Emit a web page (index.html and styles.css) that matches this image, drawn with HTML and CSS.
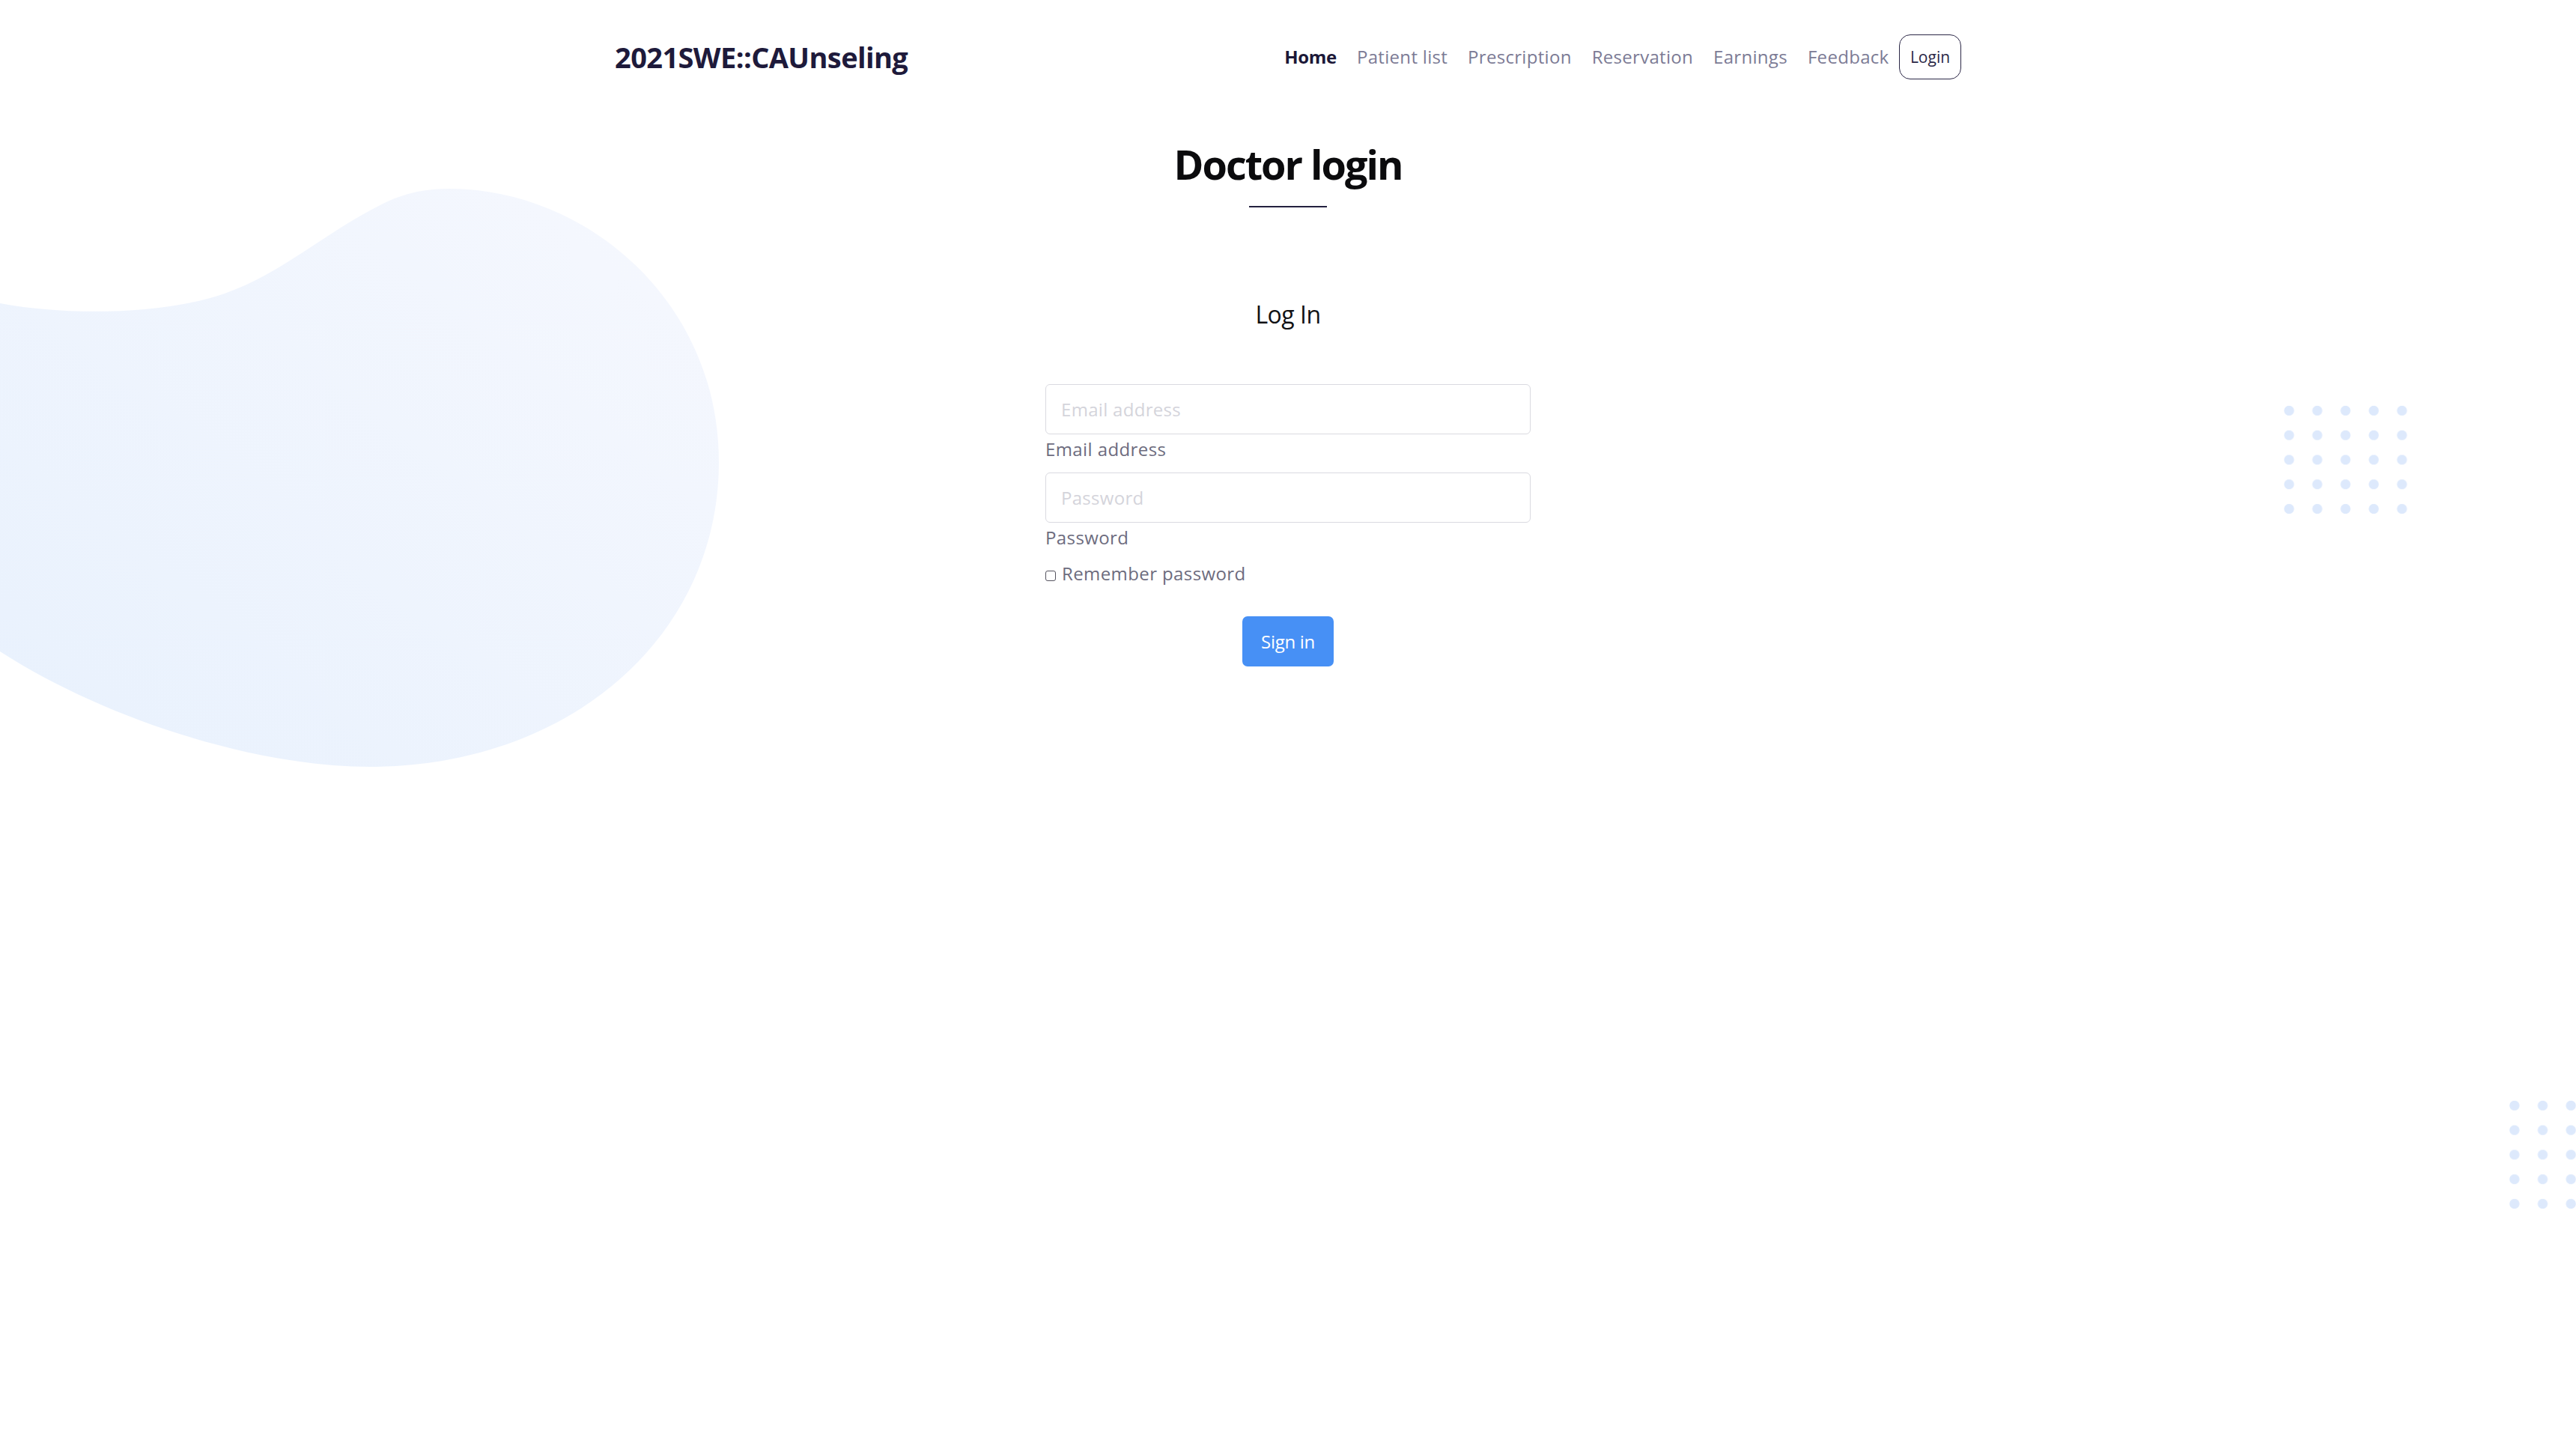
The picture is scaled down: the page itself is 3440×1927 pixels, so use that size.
FILE: index.html
```html
<!DOCTYPE html>
<html lang="en">
<head>
<meta charset="utf-8">
<title>Doctor login</title>
<link rel="stylesheet" href="styles.css">
</head>
<body>
<svg class="blob" width="1000" height="1100" viewBox="0 0 1000 1100" aria-hidden="true">
  <defs>
    <linearGradient id="blobGrad" x1="0" y1="1" x2="1" y2="0">
      <stop offset="0" stop-color="#e8f1fd"/>
      <stop offset="1" stop-color="#f6f8fe"/>
    </linearGradient>
  </defs>
  <path fill="url(#blobGrad)" d="M-10 403 L0 405 C90 422 220 420 300 392 C380 364 440 305 520 268 C548 256 572 252 600 252 C780 252 960 400 960 617 C960 850 760 1024 494 1024 C340 1024 140 960 0 870 L-10 870 Z"/>
</svg>
<div class="dots dots-top"></div>
<div class="dots dots-bottom"></div>

<header class="topbar">
  <div class="container nav-row">
    <a class="brand" href="#">2021SWE::CAUnseling</a>
    <nav class="menu">
      <a class="menu-link active" href="#">Home</a>
      <a class="menu-link" href="#">Patient list</a>
      <a class="menu-link" href="#">Prescription</a>
      <a class="menu-link" href="#">Reservation</a>
      <a class="menu-link" href="#">Earnings</a>
      <a class="menu-link" href="#">Feedback</a>
      <a class="login-btn" href="#">Login</a>
    </nav>
  </div>
</header>

<main class="page">
  <h1 class="page-title">Doctor login</h1>
  <div class="title-rule"></div>
  <h2 class="form-title">Log In</h2>
  <form class="login-form">
    <div class="field">
      <input class="text-input" type="email" id="email" placeholder="Email address">
      <label class="field-label" for="email">Email address</label>
    </div>
    <div class="field field-second">
      <input class="text-input" type="password" id="password" placeholder="Password">
      <label class="field-label" for="password">Password</label>
    </div>
    <label class="remember"><input class="check" type="checkbox">Remember password</label>
    <div class="actions">
      <button class="btn-primary" type="button">Sign in</button>
    </div>
  </form>
</main>
</body>
</html>
```

FILE: styles.css
```css
html, body {
  margin: 0;
  padding: 0;
}
body {
  position: relative;
  min-height: 1927px;
  background: #ffffff;
  font-family: "Open Sans", "Liberation Sans", sans-serif;
  overflow-x: hidden;
}

.blob {
  position: absolute;
  left: 0;
  top: 0;
  z-index: 0;
}

.dots {
  position: absolute;
  z-index: 0;
  background-image: radial-gradient(circle, #dde9fc 6.2px, rgba(221, 233, 252, 0) 7px);
  background-size: 37.7px 32.8px;
}
.dots-top {
  left: 3038px;
  top: 532px;
  width: 189px;
  height: 164px;
}
.dots-bottom {
  left: 3339px;
  top: 1460px;
  width: 101px;
  height: 164px;
}

.topbar, .page {
  position: relative;
  z-index: 1;
}

.container {
  width: 1798px;
  margin: 0 auto;
}

.nav-row {
  display: flex;
  align-items: center;
  justify-content: space-between;
  height: 152px;
}

.brand {
  font-size: 38px;
  line-height: 1;
  font-weight: 700;
  color: #1e1a3b;
  text-decoration: none;
  letter-spacing: -0.6px;
}

.menu {
  display: flex;
  align-items: center;
}

.menu-link {
  font-size: 24px;
  line-height: 1;
  padding: 0 13.5px;
  color: #7c7b95;
  text-decoration: none;
  letter-spacing: 0.3px;
}
.menu-link.active {
  color: #1c1838;
  font-weight: 700;
  letter-spacing: -0.3px;
}

.login-btn {
  display: flex;
  align-items: center;
  justify-content: center;
  box-sizing: border-box;
  width: 83px;
  height: 60px;
  border: 1.5px solid #2b2746;
  border-radius: 15px;
  font-size: 21px;
  color: #2b2746;
  text-decoration: none;
}

.page {
  display: flex;
  flex-direction: column;
  align-items: center;
}

.page-title {
  margin: 35px 0 0;
  font-size: 54px;
  line-height: 65px;
  font-weight: 700;
  color: #0b0b0d;
  letter-spacing: -2px;
}

.title-rule {
  width: 104px;
  height: 2px;
  margin-top: 23px;
  background: #23203f;
}

.form-title {
  margin: 123px 0 0;
  font-size: 32px;
  line-height: 40px;
  font-weight: 400;
  color: #111114;
  letter-spacing: -0.5px;
}

.login-form {
  width: 648px;
  margin-top: 73px;
  display: flex;
  flex-direction: column;
}

.field {
  display: flex;
  flex-direction: column;
}
.field-second {
  margin-top: 13px;
}

.text-input {
  box-sizing: border-box;
  width: 100%;
  height: 67px;
  padding: 0 20px;
  border: 1.5px solid #dadae0;
  border-radius: 6px;
  font-family: "Open Sans", "Liberation Sans", sans-serif;
  font-size: 24px;
  color: #333;
  background: #ffffff;
  outline: none;
}
.text-input::placeholder {
  color: #d4d4db;
  letter-spacing: 0.3px;
}

.field-label {
  margin-top: 2px;
  font-size: 24px;
  line-height: 36px;
  color: #6d6c7e;
  letter-spacing: 0.4px;
}

.remember {
  margin-top: 12px;
  display: flex;
  align-items: baseline;
  font-size: 24px;
  line-height: 36px;
  color: #6d6c7e;
  letter-spacing: 0.4px;
}

.check {
  appearance: none;
  -webkit-appearance: none;
  box-sizing: border-box;
  width: 14px;
  height: 14px;
  margin: 0 8px 0 0;
  border: 1.5px solid #55535f;
  border-radius: 3px;
  background: #fff;
  position: relative;
  top: 1px;
}

.actions {
  display: flex;
  justify-content: center;
  margin-top: 39px;
}

.btn-primary {
  width: 122px;
  height: 67px;
  border: 0;
  border-radius: 7px;
  background: #4790f5;
  color: #ffffff;
  font-family: "Open Sans", "Liberation Sans", sans-serif;
  font-size: 24px;
  letter-spacing: -0.3px;
  cursor: pointer;
}
```
